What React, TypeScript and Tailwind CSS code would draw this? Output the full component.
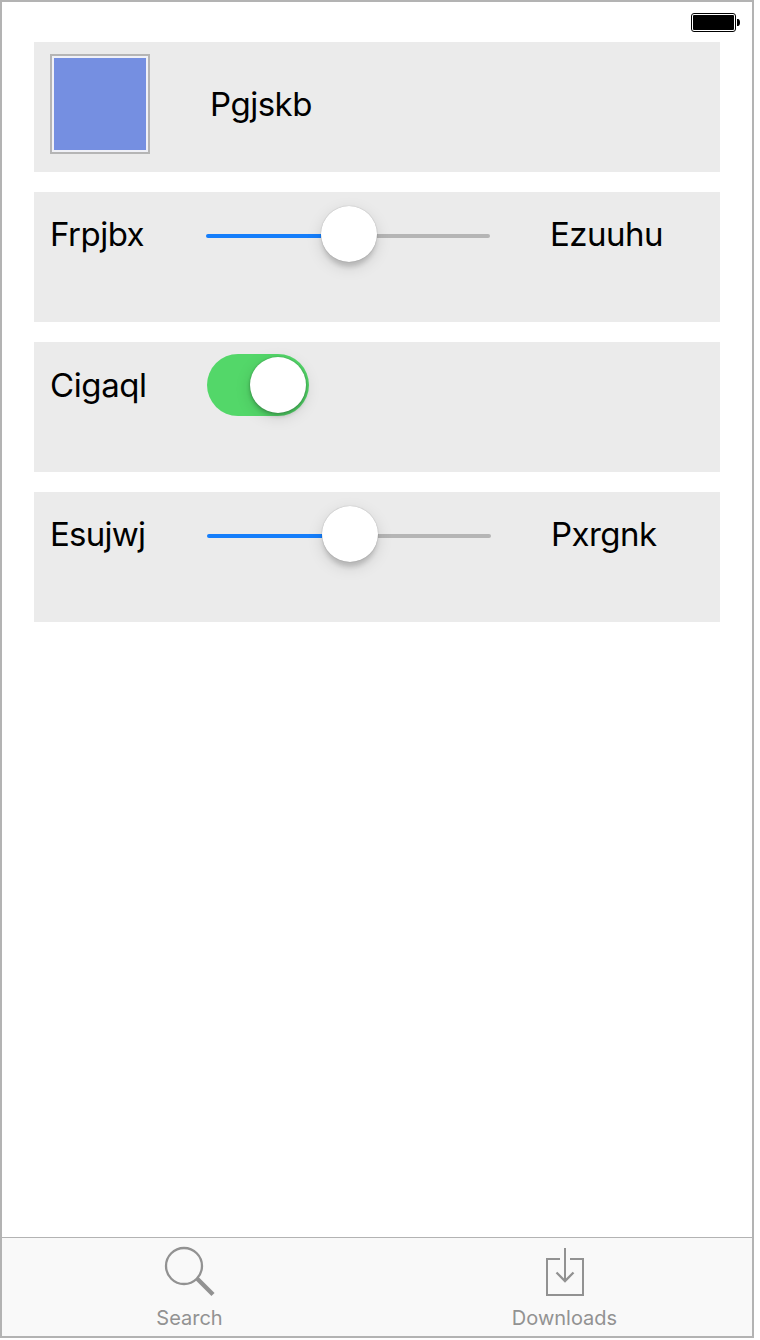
import type { ReactNode } from "react";

function Card({ children }: { children?: ReactNode }) {
  return <section className="flex h-[130px] w-full items-start bg-[#ebebeb] pl-4">{children}</section>;
}

function Label({ text, className }: { text: string; className: string }) {
  return (
    <span className={`block shrink-0 whitespace-nowrap text-[33px] leading-[40px] text-black ${className}`}>{text}</span>
  );
}

function Slider() {
  return (
    <div className="mt-[14px] flex h-14 w-[284px] shrink-0 items-center">
      <div className="mt-1 h-1 w-[115px] rounded-l-full bg-[#157efb]" />
      <div className="z-10 size-14 shrink-0 rounded-full bg-white shadow-[0_0_1px_rgba(0,0,0,0.35),0_6px_4px_-1px_rgba(0,0,0,0.14),0_5px_16px_rgba(0,0,0,0.13)]" />
      <div className="mt-1 h-1 w-[113px] rounded-r-full bg-[#b5b5b5]" />
    </div>
  );
}

function Toggle() {
  return (
    <div className="mt-3 flex h-[62px] w-[102px] shrink-0 items-center justify-end rounded-full bg-[#53d769] pr-[3px]">
      <div className="size-14 rounded-full bg-white shadow-[0_0_2px_rgba(0,0,0,0.25),0_3px_4px_rgba(0,0,0,0.2),0_4px_16px_rgba(0,0,0,0.13)]" />
    </div>
  );
}

function Battery() {
  return (
    <svg width="50" height="20" viewBox="0 0 50 20">
      <rect x="0.5" y="0.5" width="44" height="18" rx="2.5" fill="#fff" stroke="#000" />
      <rect x="2" y="2" width="41" height="15" rx="1" fill="#000" />
      <path d="M46 6h1c1.2 0 2 1.500 2 3.500s-.8 3.500-2 3.500h-1z" fill="#000" />
    </svg>
  );
}

export default function App() {
  return (
    <div className="h-[1340px] w-[760px] bg-white font-['Inter',sans-serif]">
      <main className="flex h-[1338px] w-[754px] flex-col border-2 border-[#b3b3b3] bg-white">
        <header className="flex h-10 shrink-0 justify-end pr-[11px] pt-[11px]">
          <Battery />
        </header>
        <div className="flex flex-1 flex-col gap-5 px-8">
          <Card>
            <div className="mt-3 size-[100px] shrink-0 border-2 border-[#b5b5b5] bg-[#f0f1f7] p-[2px]">
              <div className="size-full bg-[#758fe1]" />
            </div>
            <Label text="Pgjskb" className="ml-[60px] mt-[42px] tracking-[-0.5px]" />
          </Card>
          <Card>
            <Label text="Frpjbx" className="mt-[22px] w-[156px] tracking-[-0.5px]" />
            <Slider />
            <Label text="Ezuuhu" className="ml-[60px] mt-[22px] tracking-[-0.5px]" />
          </Card>
          <Card>
            <Label text="Cigaql" className="mt-[23px] w-[157px] tracking-[-0.4px]" />
            <Toggle />
          </Card>
          <Card>
            <Label text="Esujwj" className="mt-[22px] w-[157px] tracking-[-0.75px]" />
            <Slider />
            <Label text="Pxrgnk" className="ml-[60px] mt-[22px] tracking-[-0.55px]" />
          </Card>
        </div>
        <nav className="flex h-[99px] shrink-0 border-t border-[#b3b3b3] bg-[#f9f9f9] text-[20px] leading-6 text-[#929292]">
          <div className="flex w-[375px] flex-col items-center">
            <svg className="mr-[2px] mt-2" width="52" height="52" viewBox="0 0 52 52" fill="none" stroke="#929292">
              <circle cx="21" cy="20" r="18" strokeWidth="2.3" />
              <path d="M34 32.500L50 48.500" strokeWidth="4.500" />
            </svg>
            <span className="mt-2">Search</span>
          </div>
          <div className="flex w-[375px] flex-col items-center">
            <svg className="mt-2" width="40" height="52" viewBox="0 0 40 52" fill="none" stroke="#929292" strokeWidth="2">
              <path d="M15 13H2V49H38V13H25M20 2V35" />
              <path d="M11.500 26.500L20 35L28.500 26.500" strokeWidth="2.3" />
            </svg>
            <span className="mt-2">Downloads</span>
          </div>
        </nav>
      </main>
    </div>
  );
}
